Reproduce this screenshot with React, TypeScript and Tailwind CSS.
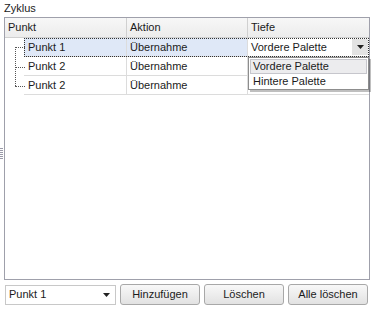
import React from "react";

const font = { fontFamily: '"Liberation Sans", Arial, sans-serif' };

function Arrow({ className = "" }: { className?: string }) {
  return (
    <svg width="7" height="4" viewBox="0 0 7 4" className={className}>
      <path d="M0 0H7L3.5 4Z" fill="#222" />
    </svg>
  );
}

const rows = [
  { p: "Punkt 1", a: "Übernahme", t: "Vordere Palette" },
  { p: "Punkt 2", a: "Übernahme", t: "Vordere Palette" },
  { p: "Punkt 2", a: "Übernahme", t: "Vordere Palette" },
];

export default function App() {
  return (
    <div
      className="relative w-[371px] h-[310px] bg-white text-[11px] leading-none text-[#1b1b1b] overflow-hidden"
      style={font}
    >
      <div className="h-[17px] pl-[4px] pt-[3px]">Zyklus</div>

      {/* grid */}
      <div className="relative ml-[4px] w-[366px] h-[263px] border border-[#9fa0ab]">
        <div className="grid grid-cols-[122px_121px_1fr] h-[20px] bg-gradient-to-b from-[#f7f7f7] to-[#ececec] border-b border-[#d0d0d0]">
          <div className="flex items-center pl-[3px] border-r border-[#d0d0d0]">Punkt</div>
          <div className="flex items-center pl-[3px] border-r border-[#d0d0d0]">Aktion</div>
          <div className="flex items-center pl-[3px]">Tiefe</div>
        </div>

        <div className="relative">
          {/* tree lines */}
          <div className="absolute left-[10px] top-[9px] h-[39px] border-l border-dotted border-[#555]" />
          {[9, 29, 48].map((y) => (
            <div
              key={y}
              className="absolute left-[10px] w-[10px] border-t border-dotted border-[#555]"
              style={{ top: y }}
            />
          ))}

          {rows.map((r, i) => (
            <div
              key={i}
              className={
                "ml-[19px] grid grid-cols-[103px_121px_1fr] h-[19px] border-b border-[#dcdcdc] " +
                (i === 0 ? "bg-[#dfe8f7] outline outline-1 outline-dotted outline-[#333] -outline-offset-1" : "")
              }
            >
              <div className="flex items-center pl-[4px] border-r border-[#dcdcdc]">{r.p}</div>
              <div className="flex items-center pl-[3px] border-r border-[#dcdcdc]">{r.a}</div>
              {i === 0 ? (
                <div className="flex items-stretch bg-white">
                  <div className="flex-1 flex items-center pl-[3px]">{r.t}</div>
                  <div className="w-[16px] my-[1px] mr-[1px] flex items-center justify-center bg-[#e3e3e3]">
                    <Arrow />
                  </div>
                </div>
              ) : (
                <div className="flex items-center pl-[3px]">{r.t}</div>
              )}
            </div>
          ))}

          {/* dropdown popup */}
          <div className="absolute left-[243px] top-[19px] w-[121px] h-[33px] bg-white border border-[#8d8d8d] shadow-[2px_2px_0_rgba(0,0,0,0.25)] p-[1px]">
            <div className="h-[15px] flex items-center pl-[2px] bg-[#ececee] border border-[#c6c6cc]">
              Vordere Palette
            </div>
            <div className="h-[15px] flex items-center pl-[3px]">Hintere Palette</div>
          </div>
        </div>
      </div>

      {/* splitter grip */}
      <div className="absolute left-0 top-[148px] flex flex-col gap-[1px]">
        {[0, 1, 2, 3, 4, 5].map((k) => (
          <div key={k} className="w-[3px] h-[1px] bg-[#9a9aa8]" />
        ))}
      </div>

      {/* bottom bar */}
      <div className="flex items-center gap-[4px] mt-[4px] ml-[5px]">
        <div className="w-[111px] h-[20px] border border-[#c8c8c8] flex items-center justify-between pl-[3px] pr-[5px]">
          <span>Punkt 1</span>
          <Arrow />
        </div>
        <button className="w-[80px] h-[21px] rounded-[3px] border border-[#a8a8a8] bg-gradient-to-b from-[#f8f8f8] to-[#e2e2e2] flex items-center justify-center">
          Hinzufügen
        </button>
        <button className="w-[80px] h-[21px] rounded-[3px] border border-[#a8a8a8] bg-gradient-to-b from-[#f8f8f8] to-[#e2e2e2] flex items-center justify-center">
          Löschen
        </button>
        <button className="w-[80px] h-[21px] rounded-[3px] border border-[#a8a8a8] bg-gradient-to-b from-[#f8f8f8] to-[#e2e2e2] flex items-center justify-center">
          Alle löschen
        </button>
      </div>
    </div>
  );
}
